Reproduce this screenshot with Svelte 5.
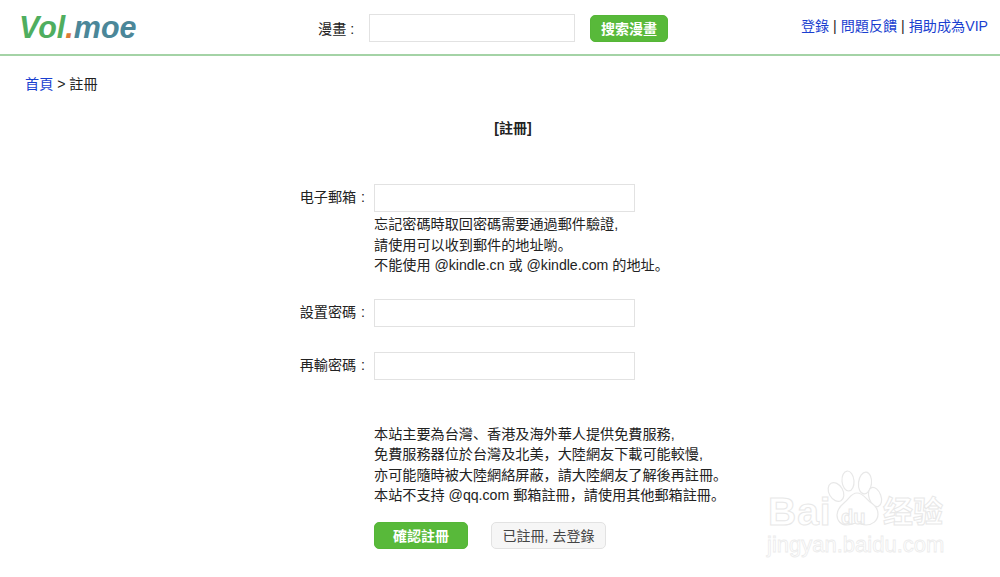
<script>
	const notes = [
		'本站主要為台灣、香港及海外華人提供免費服務,',
		'免費服務器位於台灣及北美，大陸網友下載可能較慢,',
		'亦可能隨時被大陸網絡屏蔽，請大陸網友了解後再註冊。',
		'本站不支持 @qq.com 郵箱註冊，請使用其他郵箱註冊。'
	];
</script>

<header class="top">
	<div class="logo"><span class="vol">Vol</span><span class="dot">.</span><span class="moe">moe</span></div>
	<form class="search">
		<label for="q">漫畫 :</label>
		<input id="q" type="text" />
		<button type="button" class="green small">搜索漫畫</button>
	</form>
	<nav class="links">
		<a href="#a">登錄</a> | <a href="#a">問題反饋</a> | <a href="#a">捐助成為VIP</a>
	</nav>
</header>

<div class="crumb"><a href="#a">首頁</a> &gt; 註冊</div>

<h1>[註冊]</h1>

<form class="reg">
	<div class="field first">
		<label for="mail">电子郵箱 :</label>
		<div>
			<input id="mail" type="text" />
			<p class="hint">忘記密碼時取回密碼需要通過郵件驗證,<br />請使用可以收到郵件的地址喲。<br />不能使用 @kindle.cn 或 @kindle.com 的地址。</p>
		</div>
	</div>
	<div class="field">
		<label for="pw">設置密碼 :</label>
		<input id="pw" type="password" />
	</div>
	<div class="field">
		<label for="pw2">再輸密碼 :</label>
		<input id="pw2" type="password" />
	</div>
	<div class="notes">
		{#each notes as line}
			<div>{line}</div>
		{/each}
	</div>
	<div class="actions">
		<button type="button" class="green big">確認註冊</button>
		<button type="button" class="grey">已註冊, 去登錄</button>
	</div>
</form>

<div class="mark" aria-hidden="true">
	<svg class="paw" viewBox="0 0 60 60" width="60" height="60">
		<g fill="#fff" stroke="#e8e8e8" stroke-width="1.2">
			<ellipse cx="10" cy="24" rx="7" ry="10" transform="rotate(-30 10 24)" />
			<ellipse cx="22" cy="13" rx="6" ry="10" transform="rotate(-5 22 13)" />
			<ellipse cx="39" cy="15" rx="6.5" ry="11" transform="rotate(6 39 15)" />
			<ellipse cx="49" cy="29" rx="6" ry="10" transform="rotate(-20 49 29)" />
			<path d="M31 25c6 0 9 6 13 9 5 3 8 7 8 12 0 7-6 11-12 11-4 0-6-2-9-2s-6 2-10 2c-6 0-10-4-10-10 0-5 3-9 8-13 4-3 6-9 12-9z" />
		</g>
	</svg>
	<span class="bai">Bai</span>
	<span class="du">du</span>
	<span class="jy">经验</span>
	<div class="site">jingyan.baidu.com</div>
</div>

<style>
	:global(body) {
		font-family: "Liberation Sans", "Noto Sans CJK SC", sans-serif;
		font-size: 14.13px;
		text-spacing-trim: space-all;
		color: #222;
		background: #fff;
	}

	a {
		color: #1a3fd0;
		text-decoration: none;
	}

	input {
		box-sizing: border-box;
		border: 1px solid #e2e2e2;
		background: #fff;
		margin: 0;
		padding: 0 6px;
		display: block;
	}

	button {
		font-family: inherit;
		font-size: 14px;
		border-radius: 5px;
		cursor: pointer;
		padding: 0;
	}

	.top {
		box-sizing: border-box;
		height: 56px;
		border-bottom: 2px solid #a4d3a6;
		display: flex;
		align-items: center;
		padding: 0 12px 0 19px;
	}

	.logo {
		width: 299px;
		font-size: 30.5px;
		font-weight: bold;
		font-style: italic;
	}
	.vol { color: #4fae5f; }
	.dot { color: #dc7a35; }
	.moe { color: #4b8799; }

	.search {
		display: flex;
		align-items: center;
		margin-top: 2px;
	}
	.search label {
		width: 51px;
	}
	.search input {
		width: 206px;
		height: 28px;
		margin-right: 15px;
	}

	.green {
		background: #58b93a;
		border: 1px solid #55b637;
		color: #fff;
		font-weight: bold;
	}
	.small {
		width: 78px;
		height: 27px;
	}
	.big {
		width: 94px;
		height: 27px;
	}
	.grey {
		width: 115px;
		height: 27px;
		background: #f6f6f6;
		border: 1px solid #e2e2e2;
		color: #444;
		margin-left: 23px;
	}

	.links {
		margin-left: auto;
		margin-top: -5px;
	}

	.crumb {
		padding: 19px 0 0 25px;
		line-height: 18px;
	}

	h1 {
		margin: 26px 0 0 26px;
		font-size: 14px;
		line-height: 18px;
		text-align: center;
	}

	.reg {
		margin-top: 47px;
		padding-left: 374px;
	}
	.field {
		display: flex;
		margin-left: -374px;
		margin-bottom: 25px;
	}
	.field.first {
		margin-bottom: 23px;
	}
	.field label {
		box-sizing: border-box;
		width: 374px;
		padding-right: 9px;
		text-align: right;
		word-spacing: 1px;
		line-height: 27px;
	}
	.field input {
		width: 261px;
		height: 28px;
	}
	.hint {
		margin: 0;
		padding-top: 2px;
		line-height: 20.5px;
	}

	.notes {
		margin-top: 44px;
		line-height: 20.5px;
	}

	.actions {
		margin-top: 16px;
		display: flex;
	}

	/* watermark lies over the page corner */
	.mark {
		position: absolute;
		left: 768px;
		top: 468px;
		width: 190px;
		height: 90px;
		color: #fff;
		-webkit-text-stroke: 1px #e8e8e8;
		white-space: nowrap;
	}
	.paw {
		position: absolute;
		left: 58px;
		top: 0;
	}
	.bai {
		position: absolute;
		left: 0;
		top: 24px;
		font-size: 39px;
		line-height: 39px;
		font-weight: bold;
		letter-spacing: 1px;
	}
	.du {
		position: absolute;
		left: 73px;
		top: 39px;
		font-size: 20px;
		line-height: 20px;
		font-weight: bold;
	}
	.jy {
		position: absolute;
		left: 115px;
		top: 29px;
		font-size: 30px;
		line-height: 30px;
		font-weight: bold;
	}
	.site {
		position: absolute;
		left: -1px;
		top: 65px;
		font-size: 22px;
		line-height: 24px;
		-webkit-text-stroke: .8px #ececec;
	}
</style>
